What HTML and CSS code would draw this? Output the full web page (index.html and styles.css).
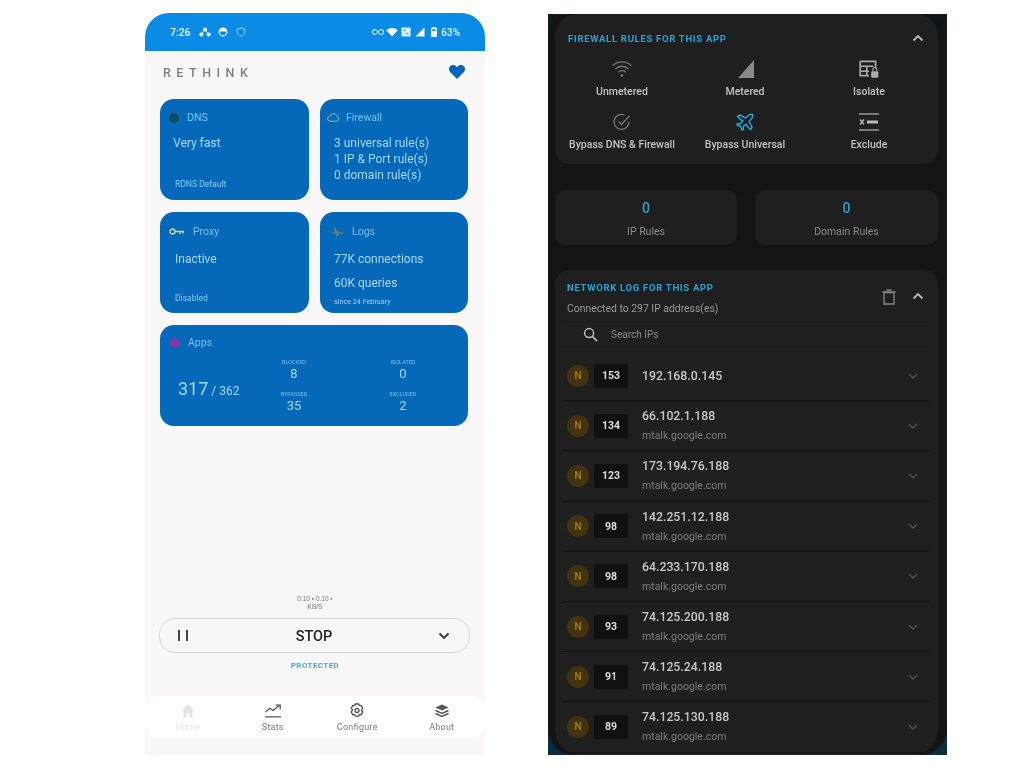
FILE: index.html
```html
<!DOCTYPE html>
<html lang="en">
<head>
<meta charset="utf-8">
<title>Rethink</title>
<link rel="stylesheet" href="styles.css">
</head>
<body>
<main class="stage">
  <section class="phone light">
    <header class="status">
      <span class="time">7:26</span>
      <svg class="si" viewBox="0 0 14 12"><circle cx="7" cy="3" r="2.4"/><circle cx="2.6" cy="9" r="2.4"/><circle cx="11.4" cy="9" r="2.4"/><path d="M7 3L2.6 9M7 3l4.4 6" stroke="#fff" fill="none"/></svg>
      <svg class="si" viewBox="0 0 12 12"><circle cx="6" cy="6" r="4.6" fill="none" stroke="#fff" stroke-width="1.4"/><path d="M1.5 5.5a4.5 4.5 0 0 1 9 0z"/></svg>
      <svg class="si dim" viewBox="0 0 12 12"><path d="M6 1l4.5 1.6v3.2c0 2.6-2 4.4-4.5 5.2-2.500-.8-4.500-2.600-4.500-5.200V2.600z" fill="none" stroke="#9fd6f8" stroke-width="1.2"/></svg>
      <span class="status-right">
        <svg class="si" viewBox="0 0 12 8"><path d="M3 1.500a2.500 2.500 0 0 0 0 5c2 0 4-5 6-5a2.500 2.500 0 0 1 0 5c-2 0-4-5-6-5z" fill="none" stroke="#d8effd" stroke-width="1.100"/></svg>
        <svg class="si" viewBox="0 0 12 10"><path d="M6 9.500L.3 3.200C3.500.4 8.500.4 11.700 3.200z"/></svg>
        <svg class="si" viewBox="0 0 12 12"><rect x=".5" y=".5" width="11" height="11" rx="1" fill="#d8effd"/><path d="M3 3h3v2H3zM6 7h3v2H6z" fill="#6fb9ec"/></svg>
        <svg class="si" viewBox="0 0 10 10"><path d="M9.500.5v9H.5z"/></svg>
        <svg class="si batt" viewBox="0 0 7 12"><path d="M2 0h3v1h2v11H0V1h2z"/><path d="M1.300 2.400h4.400v2.600H1.300z" fill="#3f9fe6"/></svg>
        <span class="pct">63%</span>
      </span>
    </header>

    <div class="brand-row">
      <span class="brand">RETHINK</span>
      <svg class="heart" viewBox="0 0 16 14"><path d="M8 14L1.300 7.300C-.5 5.400-.4 2.600 1.300 1.100 3-.4 5.700-.2 7.100 1.300L8 2.300l.9-1C10.300-.2 13-.4 14.700 1.100c1.700 1.500 1.800 4.300 0 6.200z"/></svg>
    </div>

    <div class="tiles">
      <article class="tile">
        <div class="tile-head"><span class="dot green"></span><span>DNS</span></div>
        <div class="tile-body"><p>Very fast</p></div>
        <div class="tile-foot up-1">RDNS Default</div>
      </article>
      <article class="tile">
        <div class="tile-head tight"><svg class="head-icon fw" viewBox="0 0 14 10"><path d="M3.500 9a2.600 2.600 0 0 1-.4-5.200 3.900 3.900 0 0 1 7.400-.4A2.900 2.900 0 0 1 10.500 9z" fill="none" stroke="#a8bf9c" stroke-width="1"/></svg><span>Firewall</span></div>
        <div class="tile-body lines"><p>3 universal rule(s)</p><p>1 IP &amp; Port rule(s)</p><p>0 domain rule(s)</p></div>
      </article>
      <article class="tile row-two">
        <div class="tile-head"><svg class="head-icon" viewBox="0 0 16 8"><circle cx="3.500" cy="4" r="2.500" fill="none" stroke="#bcd8b4" stroke-width="1.400"/><path d="M6 4h9M11 4v2.500M14 4v2" fill="none" stroke="#bcd8b4" stroke-width="1.400"/></svg><span>Proxy</span></div>
        <div class="tile-body inactive"><p>Inactive</p></div>
        <div class="tile-foot">Disabled</div>
      </article>
      <article class="tile row-two">
        <div class="tile-head tight"><svg class="head-icon lg" viewBox="0 0 16 13"><path d="M4 0l3 5.500 8 2.500-6 .5-2.500 4-.5-4L1 7.500l3.500-1.500z" fill="#5f8178"/></svg><span>Logs</span></div>
        <div class="tile-body logs"><p>77K connections</p><p>60K queries</p></div>
        <div class="tile-foot tiny">since 24 February</div>
      </article>
      <article class="tile wide">
        <div class="tile-head up-1"><span class="dot purple"></span><span>Apps</span></div>
        <div class="apps">
          <div class="apps-total"><b>317</b> / <span>362</span></div>
          <div class="apps-stats">
            <div class="stat"><small>BLOCKED</small><span>8</span></div>
            <div class="stat"><small>ISOLATED</small><span>0</span></div>
            <div class="stat"><small>BYPASSED</small><span>35</span></div>
            <div class="stat"><small>EXCLUDED</small><span>2</span></div>
          </div>
        </div>
      </article>
    </div>

    <div class="controls">
      <div class="speed">0.10 ▪ 0.10 ▪<br>KB/S</div>
      <div class="stop">
        <span class="pause"><i></i><i></i></span>
        <span class="stop-label">STOP</span>
        <svg class="stop-chev" viewBox="0 0 12 8"><path d="M1.500 1.500L6 6l4.500-4.500" fill="none" stroke="#333" stroke-width="1.800"/></svg>
      </div>
      <div class="protected">PROTECTED</div>
    </div>

    <nav class="nav">
      <div class="nav-item faint"><svg viewBox="0 0 16 16"><path d="M8 1.500L1.500 7.500H3.500V14.500H6.500V10H9.500V14.500H12.500V7.500H14.500z" fill="#e4e2e4"/></svg><span>Home</span></div>
      <div class="nav-item"><svg viewBox="0 0 20 16"><path d="M1.500 9l5-4 3.500 2.500L17 2M13 1.500h5v4.500" fill="none" stroke="#555" stroke-width="1.400"/><path d="M1 14.500h18" stroke="#555" stroke-width="1.400"/></svg><span>Stats</span></div>
      <div class="nav-item"><svg viewBox="0 0 16 16"><path d="M6.200 1h3.600l.5 1.700 1.800-.4 1.800 3-1.300 1.300v.9l1.300 1.300-1.800 3-1.800-.4-.5 1.700H6.200l-.5-1.700-1.800.4-1.800-3 1.300-1.300v-.9L2.100 5.300l1.800-3 1.800.4z" fill="none" stroke="#555" stroke-width="1.300" stroke-linejoin="round"/><circle cx="8" cy="7.500" r="2" fill="none" stroke="#555" stroke-width="1.300"/></svg><span>Configure</span></div>
      <div class="nav-item"><svg viewBox="0 0 16 16"><path d="M8 1.500l6.500 3L8 7.500l-6.500-3z" fill="#555"/><path d="M1.500 7.500l6.500 3 6.500-3M1.500 10.500l6.500 3 6.500-3" fill="none" stroke="#555" stroke-width="1.400"/></svg><span>About</span></div>
    </nav>
  </section>

  <section class="phone dark">
    <div class="dark-inner">
      <section class="panel rules">
        <div class="panel-title">
          <h2>FIREWALL RULES FOR THIS APP</h2>
          <svg class="up" viewBox="0 0 12 8"><path d="M1.500 6.500L6 2l4.500 4.500" fill="none" stroke="#bbb" stroke-width="1.800"/></svg>
        </div>
        <div class="rule-grid">
          <div class="rule"><svg viewBox="0 0 20 16"><path d="M1.500 5a12 12 0 0 1 17 0M4 8a8.500 8.500 0 0 1 12 0M6.500 11a4.800 4.800 0 0 1 7 0" fill="none" stroke="#777" stroke-width="1.200"/><circle cx="10" cy="14" r="1.300" fill="#777"/></svg><span>Unmetered</span></div>
          <div class="rule"><svg viewBox="0 0 20 20"><path d="M19 1v18H3z" fill="#8a8a8a"/></svg><span>Metered</span></div>
          <div class="rule"><svg viewBox="0 0 20 18"><path d="M2 2h14v6M2 2v13h8M2 6.500h12M2 11h8M8 6.500V15" fill="none" stroke="#aaa" stroke-width="1.500"/><rect x="12" y="11" width="6.500" height="6" rx="1" fill="#aaa"/><path d="M13.500 11V9.500a1.700 1.700 0 0 1 3.500 0V11" fill="none" stroke="#aaa"/></svg><span>Isolate</span></div>
          <div class="rule"><svg viewBox="0 0 20 20"><path d="M17 9.500A7.500 7.500 0 1 1 12.500 3" fill="none" stroke="#777" stroke-width="1.300"/><path d="M6.500 9.500l3 3L17.500 4" fill="none" stroke="#777" stroke-width="1.300"/></svg><span>Bypass DNS &amp; Firewall</span></div>
          <div class="rule"><svg viewBox="0 0 20 20"><path d="M17.500 2.500c-2-.8-3.500.2-5 1.700L10.500 6 5 3 2.500 4.500l3 3L8 9l-3 3-2.500-.5L2 13l3.500 1.500L7 18l1.500-.5L8 15l3-3 1.500 2.500 3 3 1.500-2.500-3-5.500 1.800-2c1.500-1.500 2.500-3 1.700-5z" fill="none" stroke="#29a3dc" stroke-width="1.500" stroke-linejoin="round"/></svg><span>Bypass Universal</span></div>
          <div class="rule"><svg viewBox="0 0 22 20"><path d="M1 2h20M1 18h20" stroke="#999" stroke-width="1.300"/><path d="M2 7.500l4 5M6 7.500l-4 5" stroke="#bbb" stroke-width="1.300"/><path d="M9 10h11" stroke="#bbb" stroke-width="3"/></svg><span>Exclude</span></div>
        </div>
      </section>

      <div class="counts">
        <div class="count"><b>0</b><span>IP Rules</span></div>
        <div class="count"><b>0</b><span>Domain Rules</span></div>
      </div>

      <section class="panel log">
        <div class="log-head">
          <div>
            <h2>NETWORK LOG FOR THIS APP</h2>
            <p>Connected to 297 IP address(es)</p>
          </div>
          <svg class="trash" viewBox="0 0 14 16"><path d="M2 3.500h10V15H2zM.5 3h13M4.500 1h5" fill="none" stroke="#888" stroke-width="1.300"/></svg>
          <svg class="up" viewBox="0 0 12 8"><path d="M1.500 6.500L6 2l4.500 4.500" fill="none" stroke="#bbb" stroke-width="1.800"/></svg>
        </div>
        <div class="search">
          <svg viewBox="0 0 16 16"><circle cx="6.500" cy="6.500" r="4.800" fill="none" stroke="#bbb" stroke-width="1.600"/><path d="M10 10l5 5" stroke="#bbb" stroke-width="1.800"/></svg>
          <span>Search IPs</span>
        </div>
        <ul class="rows">
          <li class="row"><span class="n">N</span><span class="hits">153</span><div class="addr single"><b>192.168.0.145</b></div><svg class="down" viewBox="0 0 12 8"><path d="M2 2l4 4 4-4" fill="none" stroke="#555" stroke-width="1.300"/></svg></li>
          <li class="row"><span class="n">N</span><span class="hits">134</span><div class="addr"><b>66.102.1.188</b><span>mtalk.google.com</span></div><svg class="down" viewBox="0 0 12 8"><path d="M2 2l4 4 4-4" fill="none" stroke="#555" stroke-width="1.300"/></svg></li>
          <li class="row"><span class="n">N</span><span class="hits">123</span><div class="addr"><b>173.194.76.188</b><span>mtalk.google.com</span></div><svg class="down" viewBox="0 0 12 8"><path d="M2 2l4 4 4-4" fill="none" stroke="#555" stroke-width="1.300"/></svg></li>
          <li class="row"><span class="n">N</span><span class="hits">98</span><div class="addr"><b>142.251.12.188</b><span>mtalk.google.com</span></div><svg class="down" viewBox="0 0 12 8"><path d="M2 2l4 4 4-4" fill="none" stroke="#555" stroke-width="1.300"/></svg></li>
          <li class="row"><span class="n">N</span><span class="hits">98</span><div class="addr"><b>64.233.170.188</b><span>mtalk.google.com</span></div><svg class="down" viewBox="0 0 12 8"><path d="M2 2l4 4 4-4" fill="none" stroke="#555" stroke-width="1.300"/></svg></li>
          <li class="row"><span class="n">N</span><span class="hits">93</span><div class="addr"><b>74.125.200.188</b><span>mtalk.google.com</span></div><svg class="down" viewBox="0 0 12 8"><path d="M2 2l4 4 4-4" fill="none" stroke="#555" stroke-width="1.300"/></svg></li>
          <li class="row"><span class="n">N</span><span class="hits">91</span><div class="addr"><b>74.125.24.188</b><span>mtalk.google.com</span></div><svg class="down" viewBox="0 0 12 8"><path d="M2 2l4 4 4-4" fill="none" stroke="#555" stroke-width="1.300"/></svg></li>
          <li class="row"><span class="n">N</span><span class="hits">89</span><div class="addr"><b>74.125.130.188</b><span>mtalk.google.com</span></div><svg class="down" viewBox="0 0 12 8"><path d="M2 2l4 4 4-4" fill="none" stroke="#555" stroke-width="1.300"/></svg></li>
        </ul>
      </section>
    </div>
  </section>
</main>
</body>
</html>
```

FILE: styles.css
```css
* { box-sizing: border-box; }
html, body { margin: 0; height: 100%; background: #fff; overflow: hidden; }
body { font-family: Roboto, "Liberation Sans", sans-serif; }
p, h2, ul { margin: 0; padding: 0; }
ul { list-style: none; }

.stage { display: flex; gap: 63px; padding: 13px 0 0 145px; align-items: flex-start; }
.phone { height: 742px; overflow: hidden; filter: blur(0.4px); }

/* Light phone */
.light { width: 340px; background: #faf7f9; border-radius: 24px 24px 0 0; display: flex; flex-direction: column; }
.status { height: 38px; flex: none; background: #0a8be6; display: flex; align-items: center; padding: 0 25px; gap: 6px; color: #e6f5fe; font-size: 10px; font-weight: 500; }
.time { margin-right: 2px; letter-spacing: .2px; }
.si { width: 12px; height: 10px; fill: #fff; flex: none; }
.status-right { margin-left: auto; display: flex; align-items: center; gap: 2px; }
.si.batt { width: 6px; margin-left: 3px; }
.pct { margin-left: 2px; }

.brand-row { display: flex; justify-content: space-between; align-items: center; padding: 0 20px 6px 18px; height: 48px; flex: none; }
.brand { font-size: 12.5px; letter-spacing: 5.5px; color: #808080; font-weight: 500; }
.heart { width: 16px; height: 14px; fill: #0565bc; }

.tiles { display: grid; grid-template-columns: 149px 148px; grid-auto-rows: 101px; gap: 12px 11px; padding-left: 15px; }
.tile { background: #0568b9; border-radius: 14px; color: #a4d5f4; padding: 12px 10px 10px 9px; display: flex; flex-direction: column; }
.tile.wide { grid-column: 1 / 3; }
.tile-head { display: flex; align-items: center; gap: 8px; font-size: 10.5px; height: 13px; color: #7cc0ec; flex: none; }
.tile-head.tight { gap: 6px; }
.tile-head.up-1 { margin-top: -1px; }
.row-two .tile-head { margin-top: 1px; }
.dot { width: 10px; height: 10px; border-radius: 50%; flex: none; }
.dot.green { background: #0f4f5c; }
.dot.purple { background: #7d3aa0; margin-left: 1px; }
.head-icon { width: 16px; height: 11px; flex: none; }
.head-icon.fw { width: 13px; margin-left: -2px; }
.head-icon.lg { height: 14px; margin-left: 1px; }
.tile-body { margin-top: 11px; padding-left: 4px; font-size: 12px; line-height: 16px; color: #a8d6f3; flex: 1; }
.tile-body.lines { padding-left: 5px; }
.row-two .tile-body { margin-top: 13px; }
.tile-body.inactive { padding-left: 6px; }
.tile-body.logs { padding-left: 5px; }
.tile-body.logs p + p { margin-top: 7.5px; }
.tile-foot { font-size: 8.5px; line-height: 10px; padding-left: 6px; color: #8ccbf2; }
.tile-foot.up-1 { margin-bottom: 1px; }
.tile-foot.tiny { font-size: 7.2px; padding-left: 5px; color: #a4d5f4; margin-bottom: -4px; }

.apps { display: flex; align-items: flex-start; flex: 1; }
.apps-total { width: 93px; padding: 29px 0 0 9px; color: #a8d6f3; font-size: 12px; white-space: nowrap; }
.apps-total b { font-weight: 400; font-size: 18px; }
.apps-stats { display: grid; grid-template-columns: 64px 64px; gap: 8.5px 45px; margin-top: 9px; }
.stat { display: flex; flex-direction: column; align-items: center; font-size: 13px; line-height: 15px; color: #a4d5f4; }
.stat small { font-size: 5.5px; line-height: 8px; color: #7cc0ec; }

.controls { margin-top: auto; display: flex; flex-direction: column; align-items: center; }
.speed { font-family: "Liberation Sans", sans-serif; font-size: 6.5px; line-height: 8px; color: #777; text-align: center; }
.stop { width: 311px; height: 35px; margin: 7px 0 0 -1px; border: 1px solid #d5d6d2; border-radius: 16px; display: flex; align-items: center; justify-content: space-between; padding: 0 19px 0 18px; }
.pause { display: flex; gap: 6px; width: 12px; }
.pause i { width: 2px; height: 11px; background: #444; }
.stop-label { font-size: 14.5px; font-weight: 500; color: #222; margin-top: 1px; }
.stop-chev { width: 12px; height: 8px; }
.protected { font-size: 8px; font-weight: 700; letter-spacing: .4px; color: #4ea5c9; margin-top: 8px; }
.nav { margin: 26px 0 17px; height: 42px; flex: none; background: #fff; border-radius: 14px; display: grid; grid-template-columns: repeat(4, 1fr); padding: 0 1px; }
.nav-item { display: flex; flex-direction: column; align-items: center; padding-top: 7px; font-size: 9px; letter-spacing: .2px; color: #777; gap: 3px; }
.nav-item svg { width: 18px; height: 16px; }
.nav-item.faint { color: #e6e4e6; }

/* Dark phone */
.dark { width: 399px; background: linear-gradient(#11171b 0, #11171b 60%, #0b2d44 100%); margin-top: 1px; height: 741px; }
.dark-inner { height: 100%; background: #141414; border-radius: 26px; padding: 0 9px 0 7px; display: flex; flex-direction: column; }
.panel { background: #1f1f1f; border-radius: 14px; }
h2 { font-size: 9.5px; line-height: 12px; letter-spacing: .7px; font-weight: 700; color: #2aa2d8; }
.rules { height: 150px; flex: none; padding: 0 13px; border-radius: 22px 22px 14px 14px; }
.panel-title { display: flex; justify-content: space-between; align-items: center; padding: 19px 1px 0 0; height: 38px; }
.panel-title h2 { margin-top: -8px; }
.panel-title .up { margin-top: -10px; }
.up { width: 12px; height: 8px; flex: none; }
.rule-grid { display: grid; grid-template-columns: 128px 118px 130px; grid-auto-rows: 53px; margin-left: -10px; width: 376px; margin-top: 7px; }
.rule { display: flex; flex-direction: column; align-items: center; gap: 6px; font-size: 10.5px; font-weight: 500; color: #c4c4c4; white-space: nowrap; }
.rule svg { width: 22px; height: 20px; flex: none; }

.counts { display: grid; grid-template-columns: 182px 183px; gap: 18px; margin-top: 26px; flex: none; }
.count { background: #1f1f1f; border-radius: 10px; height: 55px; display: flex; flex-direction: column; align-items: center; padding-top: 10px; gap: 9px; font-size: 10.5px; color: #8b8b8b; }
.count b { font-size: 14px; line-height: 16px; font-weight: 500; color: #2aa2d8; }

.log { margin-top: 25px; flex: 1; padding: 12px 9px 0 7px; border-radius: 14px 14px 26px 26px; overflow: hidden; }
.log-head { display: flex; align-items: flex-start; padding-left: 5px; height: 39px; }
.log-head > div { flex: 1; }
.log-head p { font-size: 10.4px; color: #9a9a9a; margin-top: 9px; line-height: 12px; }
.trash { width: 14px; height: 16px; margin: 7px 16px 0 0; }
.log-head .up { margin: 10px 5px 0 0; }
.search { display: flex; align-items: center; gap: 13px; padding-left: 21px; font-size: 10px; color: #8b8b8b; height: 27px; border-top: 1px solid #1a1a1a; border-bottom: 1px solid #1a1a1a; }
.search svg { width: 15px; height: 15px; flex: none; }
.rows { margin-top: 3px; }
.row { height: 50.2px; display: flex; align-items: center; padding-left: 5px; border-bottom: 1px solid #111; }
.n { width: 22px; height: 22px; border-radius: 50%; background: #43330f; color: #a6821f; font-size: 10px; font-weight: 500; display: flex; align-items: center; justify-content: center; flex: none; }
.hits { width: 34px; height: 24px; margin-left: 5px; background: #101010; color: #ddd; font-size: 10.5px; font-weight: 700; display: flex; align-items: center; justify-content: center; flex: none; border-radius: 2px; }
.addr { flex: 1; margin-left: 14px; display: flex; flex-direction: column; gap: 5px; }
.addr.single { padding-top: 2px; }
.addr b { font-size: 12.3px; line-height: 15px; font-weight: 500; color: #c8c8c8; }
.addr span { font-size: 10.5px; line-height: 13px; color: #7f7f7f; }
.down { width: 12px; height: 8px; margin-right: 10px; flex: none; }
```
